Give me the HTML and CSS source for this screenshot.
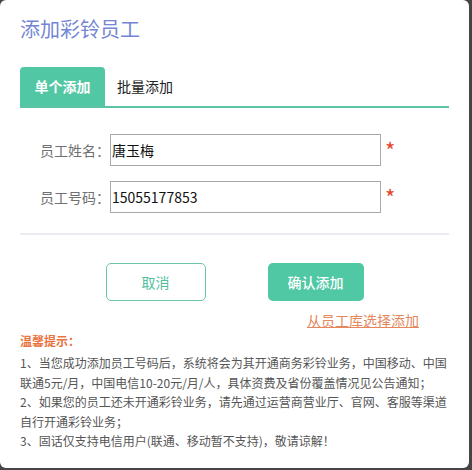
FILE: index.html
```html
<!DOCTYPE html>
<html lang="zh-CN">
<head>
    <meta charset="UTF-8">
    <title>添加彩铃员工</title>
    <link rel="stylesheet" href="styles.css">
</head>
<body>
    <div class="dialog">
        <h1 class="title">添加彩铃员工</h1>

        <div class="tabs">
            <div class="tab active">单个添加</div>
            <div class="tab">批量添加</div>
        </div>

        <div class="form">
            <div class="row">
                <label class="label">员工姓名：</label>
                <input class="field" type="text" value="唐玉梅">
                <span class="star">*</span>
            </div>
            <div class="row">
                <label class="label">员工号码：</label>
                <input class="field" type="text" value="15055177853">
                <span class="star">*</span>
            </div>
        </div>

        <div class="divider"></div>

        <div class="actions">
            <button class="btn cancel">取消</button>
            <button class="btn confirm">确认添加</button>
        </div>
        <div class="link-row">
            <a href="#" class="pick-link">从员工库选择添加</a>
        </div>

        <div class="tips">
            <div class="tips-title">温馨提示：</div>
            <p>1、当您成功添加员工号码后，系统将会为其开通商务彩铃业务，中国移动、中国联通5元/月，中国电信10-20元/月/人，具体资费及省份覆盖情况见公告通知；</p>
            <p>2、如果您的员工还未开通彩铃业务，请先通过运营商营业厅、官网、客服等渠道自行开通彩铃业务；</p>
            <p>3、固话仅支持电信用户(联通、移动暂不支持)，敬请谅解！</p>
        </div>
    </div>
</body>
</html>
```

FILE: styles.css
```css
body {
    margin: 0;
    background-color: #454545;
    font-family: "Noto Sans CJK SC", "Microsoft YaHei", sans-serif;
}
.dialog {
    width: 469px;
    height: 468px;
    box-sizing: border-box;
    padding: 15px 20px 0 20px;
    background-color: #ffffff;
    border-radius: 6px;
    overflow: hidden;
}
.title {
    margin: 0;
    font-size: 20px;
    font-weight: normal;
    line-height: 28px;
    color: #7385d4;
}

/* tabs */
.tabs {
    display: flex;
    margin-top: 24px;
    border-bottom: 2px solid #5cc3a6;
}
.tab {
    height: 39px;
    line-height: 39px;
    font-size: 14px;
    color: #222;
    padding-left: 12px;
}
.tab.active {
    width: 85px;
    padding: 0;
    text-align: center;
    background-color: #52c7a4;
    color: #fff;
    font-weight: bold;
    border-radius: 4px 4px 0 0;
}

/* form */
.form {
    display: flex;
    flex-direction: column;
    gap: 15px;
    margin-top: 26px;
}
.row {
    display: flex;
    align-items: center;
}
.label {
    width: 90px;
    text-align: right;
    font-size: 14px;
    color: #707070;
}
.field {
    width: 271px;
    height: 32px;
    box-sizing: border-box;
    margin: 0;
    padding: 0 1px;
    border: 1px solid #a9a9a9;
    font-family: inherit;
    font-size: 14px;
    color: #111;
    outline: none;
}
.star {
    margin-left: 4px;
    margin-top: -2px;
    font-size: 22px;
    line-height: 22px;
    color: #e2462c;
}
.divider {
    height: 2px;
    margin-top: 20px;
    background-color: #ebebf1;
}

/* buttons */
.actions {
    display: flex;
    justify-content: center;
    gap: 62px;
    margin-top: 28px;
}
.btn {
    height: 38px;
    box-sizing: border-box;
    border-radius: 5px;
    font-family: inherit;
    font-size: 14px;
    cursor: pointer;
}
.cancel {
    width: 100px;
    border: 1px solid #6cc5aa;
    background-color: #fff;
    color: #4fbf9c;
}
.confirm {
    width: 96px;
    border: none;
    background-color: #4fc8a3;
    color: #fff;
    font-weight: 500;
}
.link-row {
    margin-top: 8px;
    padding-right: 30px;
    text-align: right;
    line-height: 20px;
}
.pick-link {
    font-size: 14px;
    color: #e4875c;
    text-decoration: underline;
}

/* tips */
.tips {
    margin-top: 1px;
    width: 430px;
    font-size: 12px;
    color: #555;
}
.tips-title {
    line-height: 20px;
    margin-bottom: 2px;
    font-weight: bold;
    color: #e9733f;
}
.tips p {
    margin: 0;
    line-height: 19.5px;
}
```
